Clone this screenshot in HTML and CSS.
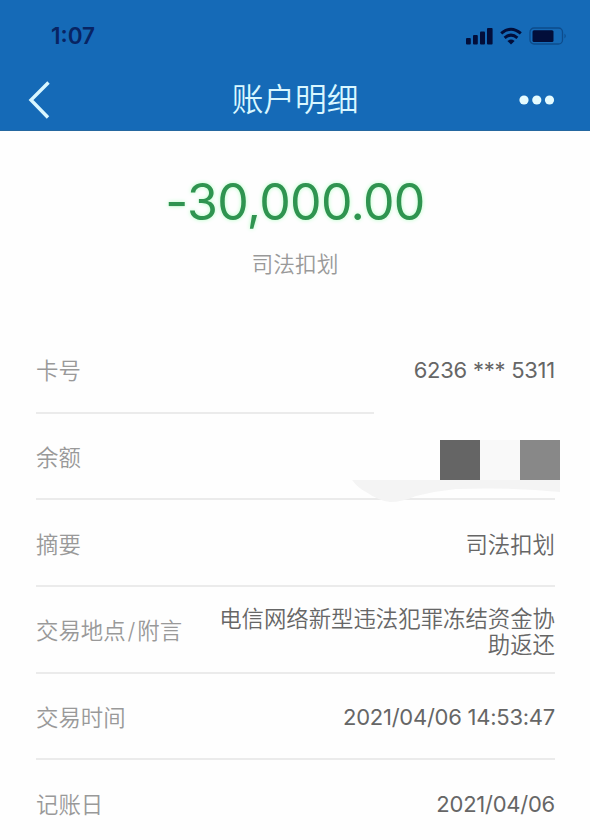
FILE: index.html
```html
<!DOCTYPE html>
<html lang="zh-CN">

<head>
    <meta charset="UTF-8">
    <meta name="viewport" content="width=device-width, initial-scale=1.0">
    <title>账户明细</title>
    <link rel="stylesheet" href="styles.css">
</head>

<body>
    <header class="header">
        <div class="status-bar">
            <span class="time">1:07</span>
            <div class="status-icons">
                <svg width="28" height="18" viewBox="0 0 28 18">
                    <rect x="0" y="11" width="4.8" height="6.5" rx="1" />
                    <rect x="7" y="8" width="4.8" height="9.5" rx="1" />
                    <rect x="14" y="4.5" width="5" height="13" rx="1" />
                    <rect x="21" y="1" width="5.6" height="16.5" rx="1" />
                </svg>
                <svg class="wifi" width="22" height="18" viewBox="0 0 22 18">
                    <path d="M1.2 6.4Q11 -2 20.8 6.4" />
                    <path d="M4.6 10.8Q11 5.4 17.4 10.8" />
                    <path class="dot" d="M7.4 14Q11 11.2 14.6 14L11 17.6Z" />
                </svg>
                <svg class="battery" width="38" height="18" viewBox="0 0 38 18">
                    <rect class="shell" x="1" y="1" width="32.5" height="16" rx="4" />
                    <rect x="3.5" y="3.2" width="21" height="11.8" rx="1.5" />
                    <path class="cap" d="M35.5 6.5Q38 9 35.5 11.5Z" />
                </svg>
            </div>
        </div>
        <nav class="nav">
            <svg class="back" width="22" height="38" viewBox="0 0 22 38">
                <path d="M20.5 1.5L3 19L20 36.5" />
            </svg>
            <h1>账户明细</h1>
            <svg class="more" width="36" height="10" viewBox="0 0 36 10">
                <circle cx="5" cy="5" r="4.6" />
                <circle cx="17.8" cy="5" r="4.6" />
                <circle cx="30.5" cy="5" r="4.6" />
            </svg>
        </nav>
    </header>

    <section class="summary">
        <div class="amount">-30,000.00</div>
        <div class="type">司法扣划</div>
    </section>

    <ul class="details">
        <li class="short-line"><span class="label">卡号</span><span class="value number">6236 *** 5311</span></li>
        <li>
            <span class="label">余额</span>
            <div class="mask">
                <i class="dark"></i><i class="light"></i><i class="mid"></i>
                <svg class="smudge" width="208" height="24" viewBox="0 0 208 24">
                    <path d="M0 0H208V12Q160 7 104 9Q84 11 64 16Q50 22 38 22Q27 21 14 12Q6 8 0 0Z" />
                </svg>
            </div>
        </li>
        <li><span class="label">摘要</span><span class="value">司法扣划</span></li>
        <li><span class="label">交易地点<span class="slash">/</span>附言</span><span class="value remark">电信网络新型违法犯罪冻结资金协助返还</span></li>
        <li><span class="label">交易时间</span><span class="value number">2021/04/06 14:53:47</span></li>
        <li><span class="label">记账日</span><span class="value number">2021/04/06</span></li>
    </ul>
</body>

</html>
```
FILE: styles.css
```css
:root {
    --blue: #156ab7;
    --ink: #020e3a;
    --pale: #d9f7ff;
    --line: #ebebeb;
}

* {
    box-sizing: border-box;
}

body {
    margin: 0;
    height: 840px;
    overflow: hidden;
    background: #fefefe;
    font-family: Inter, "Noto Sans CJK SC", sans-serif;
}

.header {
    height: 131px;
    background: var(--blue);
    border-bottom: 1px solid #2467a0;
}

.status-bar {
    height: 70px;
    padding: 1px 23px 0 51px;
    display: flex;
    align-items: center;
    justify-content: space-between;
}

.time {
    color: #082463;
    font-size: 22.5px;
    font-weight: 600;
}

.status-icons {
    display: flex;
    gap: 6px;
    fill: var(--ink);
}

.wifi {
    margin: 0 1px 0 0;
}

.wifi path {
    fill: none;
    stroke: var(--ink);
    stroke-width: 3;
}

.wifi .dot {
    fill: var(--ink);
    stroke: none;
}

.battery .shell {
    fill: none;
    stroke: #0d4c8c;
    stroke-width: 1.3;
}

.battery .cap {
    fill: #0d4c8c;
}

.nav {
    height: 60px;
    padding: 0 35px 0 28px;
    display: grid;
    grid-template-columns: 60px 1fr 60px;
    align-items: center;
}

.nav h1 {
    margin: -1px 0 0;
    padding-left: 7px;
    color: var(--pale);
    font-size: 31.7px;
    font-weight: 350;
    line-height: 40px;
    text-align: center;
}

.back {
    fill: none;
    stroke: var(--pale);
    stroke-width: 3.4;
}

.more {
    justify-self: end;
    fill: #e4fbff;
}

.summary {
    height: 196px;
    padding-top: 41px;
    text-align: center;
}

.amount {
    color: #2f9450;
    font-size: 50px;
    font-weight: 380;
    line-height: 60px;
    letter-spacing: -0.7px;
    text-shadow: 0 0 4px #b5ffc5;
}

.type {
    margin-top: 16px;
    color: #999;
    font-size: 21.7px;
    font-weight: 350;
    line-height: 32px;
}

.details {
    list-style: none;
    margin: 0;
    padding: 0 35px 0 36px;
    font-size: 22.4px;
    font-weight: 350;
    line-height: 26px;
}

.details li {
    height: 86.7px;
    padding-top: 4px;
    display: flex;
    align-items: center;
    justify-content: space-between;
    border-bottom: 2px solid var(--line);
}

.details .short-line {
    border-image: linear-gradient(to right, var(--line) 338px, transparent 338px) 1;
}

.label {
    color: #999;
    white-space: nowrap;
}

.slash {
    margin: 0 2px;
}

.value {
    max-width: 340px;
    color: #666;
    text-align: right;
}

.remark {
    padding-top: 2px;
}

.number {
    padding-bottom: 2px;
    font-size: 22px;
    font-weight: 390;
    letter-spacing: -0.25px;
}

/* hidden balance */
.mask {
    position: relative;
    display: flex;
    margin: 4px -5px 0 0;
}

.mask i {
    width: 40px;
    height: 40px;
}

.mask .dark {
    background: #656565;
}

.mask .light {
    background: #f9f9f9;
}

.mask .mid {
    background: #888;
}

.smudge {
    position: absolute;
    top: 40px;
    right: 0;
    fill: #f4f4f4;
}
```
